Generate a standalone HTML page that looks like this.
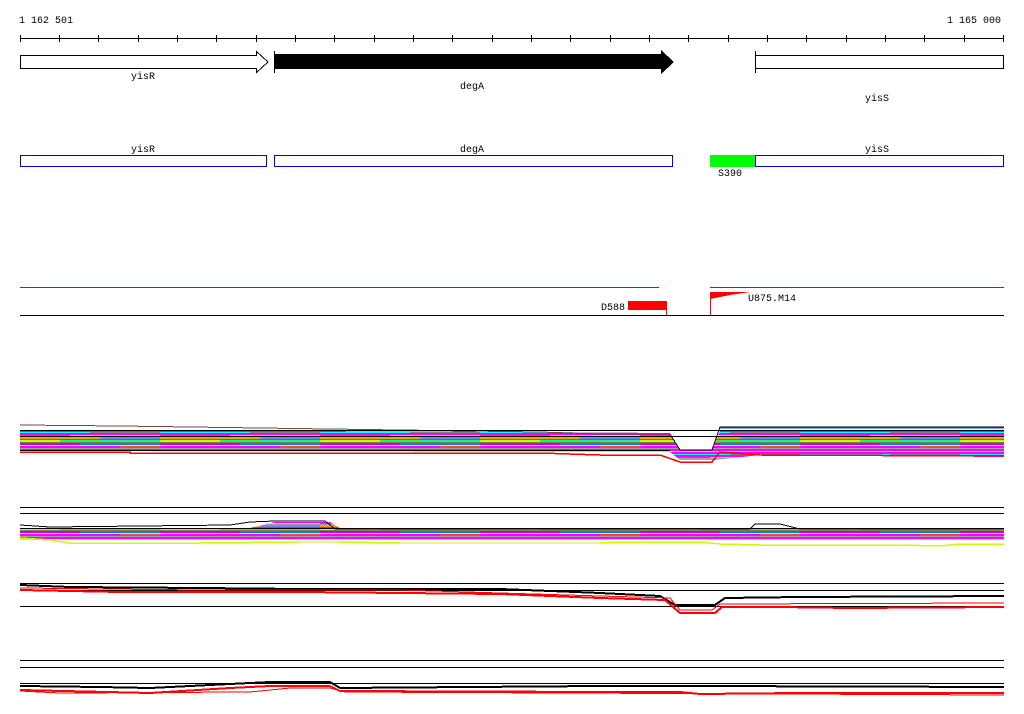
<!DOCTYPE html>
<html><head><meta charset="utf-8"><style>
html,body{margin:0;padding:0;background:#fff;width:1024px;height:714px;overflow:hidden}
svg{display:block}
text{font-family:"Liberation Mono",monospace;font-size:10px;fill:#000}
</style></head><body>
<svg width="1024" height="714" xmlns="http://www.w3.org/2000/svg" shape-rendering="crispEdges">
<defs>
<pattern id="st" x="0" y="430" width="160" height="22" patternUnits="userSpaceOnUse">
<rect x="0" y="0" width="160" height="22" fill="#b0a080"/>
<rect x="0" y="0" width="160" height="2" fill="#ff00ff"/>
<rect x="0" y="2" width="90" height="1" fill="#00ffff"/>
<rect x="90" y="2" width="70" height="1" fill="#808080"/>
<rect x="0" y="3" width="160" height="2" fill="#ff00ff"/>
<rect x="0" y="5" width="70" height="1" fill="#00c000"/>
<rect x="70" y="5" width="90" height="1" fill="#c0ff00"/>
<rect x="0" y="6" width="160" height="1" fill="#a0a0a0"/>
<rect x="0" y="7" width="100" height="2" fill="#ffa000"/>
<rect x="100" y="7" width="60" height="2" fill="#8080ff"/>
<rect x="0" y="9" width="160" height="1" fill="#ff00ff"/>
<rect x="0" y="10" width="60" height="2" fill="#c0ff00"/>
<rect x="60" y="10" width="100" height="2" fill="#00ff80"/>
<rect x="0" y="12" width="160" height="1" fill="#808040"/>
<rect x="0" y="13" width="80" height="2" fill="#c000ff"/>
<rect x="80" y="13" width="80" height="2" fill="#0080ff"/>
<rect x="0" y="15" width="160" height="1" fill="#ffff00"/>
<rect x="0" y="16" width="120" height="2" fill="#ff00ff"/>
<rect x="120" y="16" width="40" height="2" fill="#ff4040"/>
<rect x="0" y="18" width="160" height="1" fill="#a0a0a0"/>
<rect x="0" y="19" width="160" height="2" fill="#ff00ff"/>
<rect x="0" y="21" width="160" height="1" fill="#c0ff00"/>
</pattern>
</defs>

<!-- ruler -->
<text x="19" y="23">1 162 501</text>
<text x="947" y="23">1 165 000</text>
<line x1="20" y1="38.5" x2="1004" y2="38.5" stroke="#000"/>
<g stroke="#000">
<line x1="20.5" y1="35" x2="20.5" y2="42"/>
<line x1="59.5" y1="35" x2="59.5" y2="42"/><line x1="98.5" y1="35" x2="98.5" y2="42"/><line x1="138.5" y1="35" x2="138.5" y2="42"/><line x1="177.5" y1="35" x2="177.5" y2="42"/><line x1="216.5" y1="35" x2="216.5" y2="42"/><line x1="256.5" y1="35" x2="256.5" y2="42"/><line x1="295.5" y1="35" x2="295.5" y2="42"/><line x1="334.5" y1="35" x2="334.5" y2="42"/><line x1="374.5" y1="35" x2="374.5" y2="42"/><line x1="413.5" y1="35" x2="413.5" y2="42"/><line x1="452.5" y1="35" x2="452.5" y2="42"/><line x1="492.5" y1="35" x2="492.5" y2="42"/><line x1="531.5" y1="35" x2="531.5" y2="42"/><line x1="570.5" y1="35" x2="570.5" y2="42"/><line x1="610.5" y1="35" x2="610.5" y2="42"/><line x1="649.5" y1="35" x2="649.5" y2="42"/><line x1="688.5" y1="35" x2="688.5" y2="42"/><line x1="728.5" y1="35" x2="728.5" y2="42"/><line x1="767.5" y1="35" x2="767.5" y2="42"/><line x1="806.5" y1="35" x2="806.5" y2="42"/><line x1="846.5" y1="35" x2="846.5" y2="42"/><line x1="885.5" y1="35" x2="885.5" y2="42"/><line x1="924.5" y1="35" x2="924.5" y2="42"/><line x1="964.5" y1="35" x2="964.5" y2="42"/><line x1="1003.5" y1="35" x2="1003.5" y2="42"/>
</g>

<!-- genes -->
<polygon points="20.5,55.5 256.5,55.5 256.5,51.5 268,62 256.5,72.5 256.5,68.5 20.5,68.5" fill="#fff" stroke="#000"/>
<text x="131" y="79">yisR</text>
<line x1="274.5" y1="51" x2="274.5" y2="73" stroke="#000"/>
<polygon points="274,54 661,54 661,50 674,62 661,74 661,69 274,69" fill="#000"/>
<text x="460" y="89">degA</text>
<line x1="755.5" y1="51" x2="755.5" y2="73" stroke="#000"/>
<rect x="755.5" y="55.5" width="248" height="13" fill="#fff" stroke="#000"/>
<text x="865" y="101">yisS</text>

<!-- blue boxes -->
<text x="131" y="152">yisR</text>
<text x="460" y="152">degA</text>
<text x="865" y="152">yisS</text>
<rect x="20.5" y="155.5" width="246" height="11" fill="none" stroke="#0000e0"/>
<rect x="274.5" y="155.5" width="398" height="11" fill="none" stroke="#0000e0"/>
<rect x="710" y="155" width="45" height="12" fill="#00ff00"/>
<rect x="755.5" y="155.5" width="248" height="11" fill="none" stroke="#0000e0"/>
<text x="718" y="176">S390</text>

<!-- red features -->
<line x1="20" y1="287.5" x2="659" y2="287.5" stroke="#e00000"/>
<line x1="710" y1="287.5" x2="1004" y2="287.5" stroke="#e00000"/>
<line x1="20" y1="315.5" x2="1004" y2="315.5" stroke="#000"/>
<rect x="628" y="301" width="38" height="9" fill="#ff0000"/>
<line x1="666.5" y1="301" x2="666.5" y2="315" stroke="#ff0000"/>
<text x="601" y="310">D588</text>
<line x1="710.5" y1="292" x2="710.5" y2="315" stroke="#ff0000"/>
<polygon points="710,292 750,292 730,295 715,298 710,299" fill="#ff0000"/>
<text x="748" y="301">U875.M14</text>

<!-- band 1 -->
<polygon points="20,430 540,432 670,433 680,450 712,450 720,431 1004,431 1004,457 760,455 715,460 680,460 670,452 540,452 20,451" fill="url(#st)"/>
<polyline points="20,425 120,426 540,432 600,434 670,434" fill="none" stroke="#804040"/>
<line x1="20" y1="430.5" x2="1004" y2="430.5" stroke="#000"/>
<line x1="20" y1="436.5" x2="1004" y2="436.5" stroke="#000"/>
<line x1="20" y1="450.5" x2="670" y2="450.5" stroke="#000"/>
<polyline points="670,434 680,450 712,450 720,427 1004,427" fill="none" stroke="#000"/>
<polyline points="720,428 1004,428" fill="none" stroke="#0060ff"/>
<polyline points="20,452 130,452 130,453 540,453 600,455 660,455 680,462 712,462 720,452 760,455 1004,456" fill="none" stroke="#ff0000" stroke-width="1.5"/>

<!-- band 2 -->
<line x1="20" y1="507.5" x2="1004" y2="507.5" stroke="#000"/>
<line x1="20" y1="513.5" x2="1004" y2="513.5" stroke="#000"/>
<polygon points="20,528 250,528 275,522 330,522 340,528 1004,528 1004,540 20,540" fill="url(#st)"/>
<polyline points="20,525 50,527 230,525 250,522 275,521 325,521 335,529 750,529 755,524 780,524 800,529 1004,529" fill="none" stroke="#000"/>
<line x1="20" y1="528.5" x2="1004" y2="528.5" stroke="#000"/>
<polyline points="20,538 50,540 70,543 200,543 300,542 340,542 400,543 600,543 620,542 700,542 720,544 760,545 900,545 940,546 960,544 1004,544" fill="none" stroke="#c8ff00" stroke-width="1.5"/>

<!-- band 3 -->
<line x1="20" y1="583.5" x2="1004" y2="583.5" stroke="#000"/>
<line x1="20" y1="590.5" x2="1004" y2="590.5" stroke="#000"/>
<line x1="20" y1="606.5" x2="1004" y2="606.5" stroke="#000"/>
<polyline points="20,585 70,587 200,588 300,589 500,589 600,593 660,596 675,605 715,605 725,598 800,597 1004,596" fill="none" stroke="#000" stroke-width="2"/>
<polyline points="20,590 120,592 300,592 500,594 600,598 665,600 680,613 715,613 722,607 780,607 850,608 1004,607" fill="none" stroke="#ff0000" stroke-width="2"/>
<polyline points="20,588 200,590 400,590 600,596 670,598 680,610 712,610 720,604 1004,603" fill="none" stroke="#ff0000"/>

<!-- band 4 -->
<line x1="20" y1="660.5" x2="1004" y2="660.5" stroke="#000"/>
<line x1="20" y1="667.5" x2="1004" y2="667.5" stroke="#000"/>
<line x1="20" y1="683.5" x2="1004" y2="683.5" stroke="#000"/>
<polyline points="20,686 100,687 150,688 230,684 270,682 330,682 340,688 600,686 700,686 1004,687" fill="none" stroke="#000" stroke-width="2"/>
<polyline points="20,690 150,693 230,688 270,686 330,686 340,691 600,692 680,692 700,694 800,693 1004,693" fill="none" stroke="#ff0000" stroke-width="2"/>
<polyline points="20,691 60,693 250,692 290,688 330,688 345,692 1004,695" fill="none" stroke="#ff0000"/>
</svg>
</body></html>
